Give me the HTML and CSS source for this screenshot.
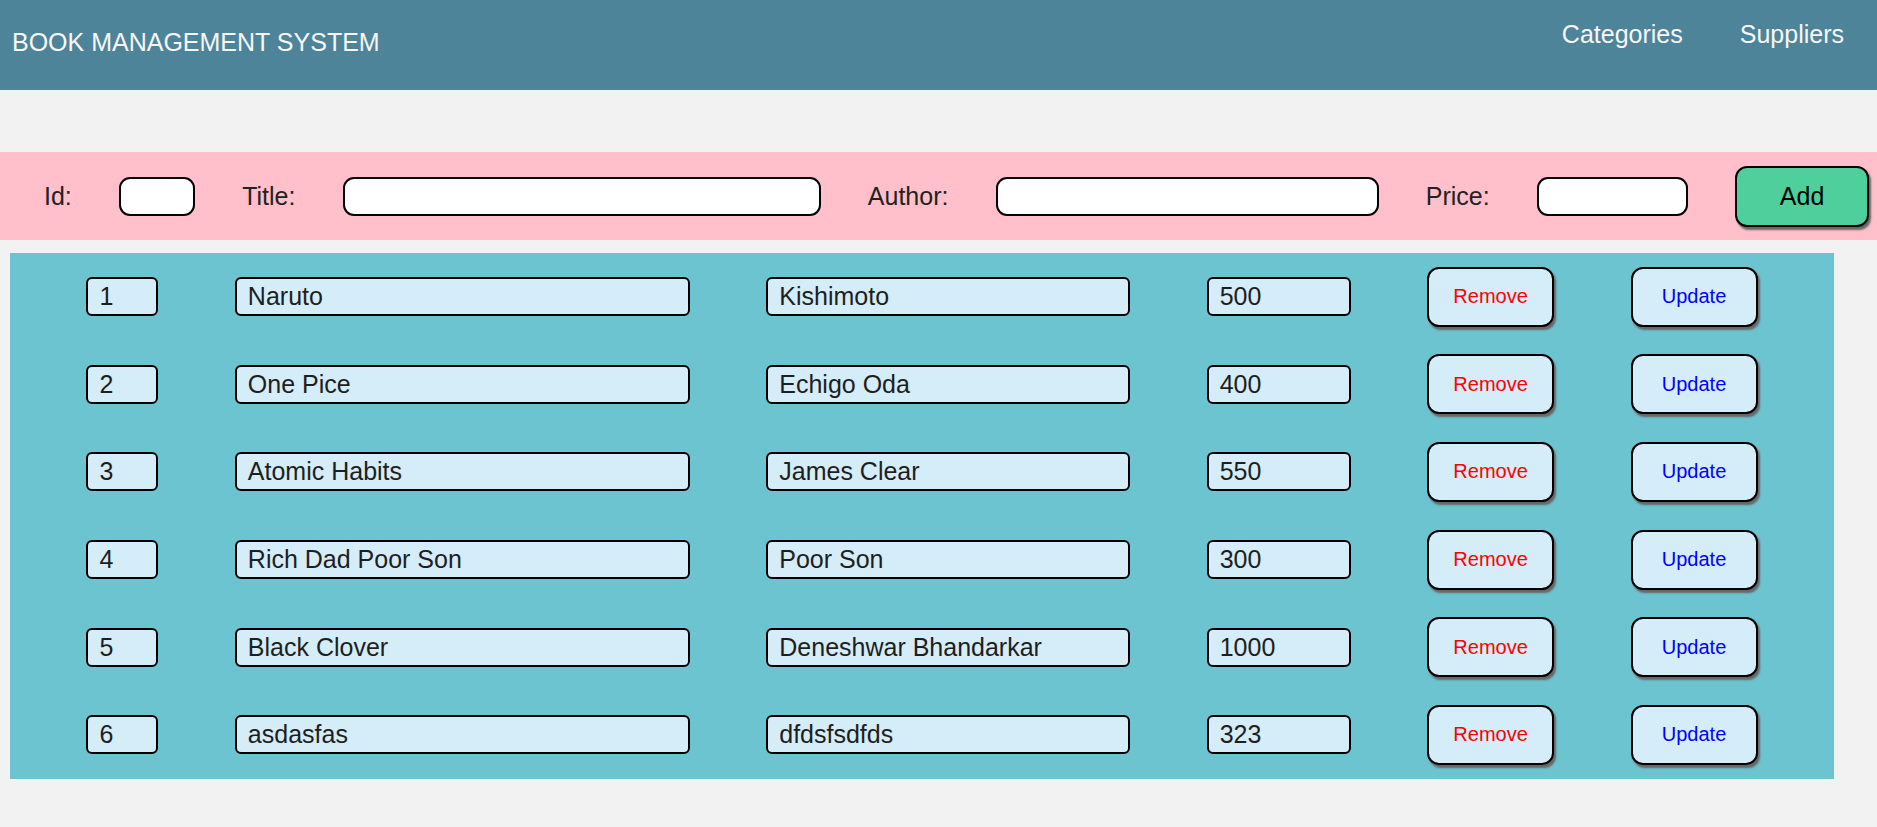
FILE: index.html
```html
<!DOCTYPE html>
<html lang="en">
<head>
<meta charset="utf-8">
<title>Book Management System</title>
<link rel="stylesheet" href="styles.css">
</head>
<body>
<header class="topbar">
  <div class="brand">BOOK MANAGEMENT SYSTEM</div>
  <nav class="nav">
    <a class="nav-link" href="#">Categories</a>
    <a class="nav-link" href="#">Suppliers</a>
  </nav>
</header>

<form class="add-form">
  <label class="form-label">Id:</label>
  <input class="form-input in-id" type="text">
  <label class="form-label">Title:</label>
  <input class="form-input in-title" type="text">
  <label class="form-label">Author:</label>
  <input class="form-input in-author" type="text">
  <label class="form-label">Price:</label>
  <input class="form-input in-price" type="text">
  <button class="add-btn" type="button">Add</button>
</form>

<section class="book-list">
  <div class="book-row">
    <span class="cell c-id">1</span>
    <span class="cell c-title">Naruto</span>
    <span class="cell c-author">Kishimoto</span>
    <span class="cell c-price">500</span>
    <button class="act remove" type="button">Remove</button>
    <button class="act update" type="button">Update</button>
  </div>
  <div class="book-row">
    <span class="cell c-id">2</span>
    <span class="cell c-title">One Pice</span>
    <span class="cell c-author">Echigo Oda</span>
    <span class="cell c-price">400</span>
    <button class="act remove" type="button">Remove</button>
    <button class="act update" type="button">Update</button>
  </div>
  <div class="book-row">
    <span class="cell c-id">3</span>
    <span class="cell c-title">Atomic Habits</span>
    <span class="cell c-author">James Clear</span>
    <span class="cell c-price">550</span>
    <button class="act remove" type="button">Remove</button>
    <button class="act update" type="button">Update</button>
  </div>
  <div class="book-row">
    <span class="cell c-id">4</span>
    <span class="cell c-title">Rich Dad Poor Son</span>
    <span class="cell c-author">Poor Son</span>
    <span class="cell c-price">300</span>
    <button class="act remove" type="button">Remove</button>
    <button class="act update" type="button">Update</button>
  </div>
  <div class="book-row">
    <span class="cell c-id">5</span>
    <span class="cell c-title">Black Clover</span>
    <span class="cell c-author">Deneshwar Bhandarkar</span>
    <span class="cell c-price">1000</span>
    <button class="act remove" type="button">Remove</button>
    <button class="act update" type="button">Update</button>
  </div>
  <div class="book-row">
    <span class="cell c-id">6</span>
    <span class="cell c-title">asdasfas</span>
    <span class="cell c-author">dfdsfsdfds</span>
    <span class="cell c-price">323</span>
    <button class="act remove" type="button">Remove</button>
    <button class="act update" type="button">Update</button>
  </div>
</section>
</body>
</html>
```

FILE: styles.css
```css
* {
  box-sizing: border-box;
}

html, body {
  margin: 0;
  padding: 0;
}

body {
  background: #f2f2f2;
  font-family: "Liberation Sans", Arial, sans-serif;
  font-size: 25px;
  color: #222;
}

.topbar {
  height: 90px;
  background: #4e849a;
  display: flex;
  justify-content: space-between;
  align-items: flex-start;
  padding: 0 33px 0 12px;
}

.brand {
  color: #f7f7f7;
  font-size: 25px;
  line-height: 29px;
  margin-top: 28px;
}

.nav {
  display: flex;
  gap: 57px;
  margin-top: 20px;
}

.nav-link {
  color: #f7f7f7;
  text-decoration: none;
  font-size: 25px;
  line-height: 29px;
}

.add-form {
  margin: 62px 0 0 0;
  height: 88px;
  background: #ffc0cb;
  display: flex;
  align-items: center;
  gap: 47.2px;
  padding-left: 44px;
}

.form-label {
  font-size: 25px;
  color: #222;
  line-height: 29px;
}

.form-input {
  height: 39px;
  border: 2px solid #000;
  border-radius: 11px;
  background: #fff;
  padding: 0 10px;
  font: inherit;
  outline: none;
}

.in-id { width: 76px; }
.in-title { width: 478px; }
.in-author { width: 383px; }
.in-price { width: 151px; }

.add-btn {
  width: 134px;
  height: 61px;
  background: #4ecf9c;
  border: 2px solid #000;
  border-radius: 12px;
  box-shadow: 2px 3px 2px #666;
  font-family: "Liberation Sans", Arial, sans-serif;
  font-size: 25px;
  color: #000;
  padding: 0;
}

.book-list {
  margin: 13px 43px 0 10px;
  background: #6cc4d0;
  display: flex;
  flex-direction: column;
}

.book-row {
  height: 87.6px;
  display: flex;
  align-items: center;
  justify-content: space-evenly;
}

.cell {
  height: 39px;
  display: flex;
  align-items: center;
  background: #d5ecf9;
  border: 2px solid #000;
  border-radius: 6px;
  padding: 0 11px;
  font-size: 25px;
  color: #1e1e1e;
  white-space: nowrap;
}

.c-id { width: 72px; }
.c-title { width: 455px; }
.c-author { width: 364px; }
.c-price { width: 144px; }

.act {
  width: 127px;
  height: 60px;
  background: #d5ecf9;
  border: 2px solid #000;
  border-radius: 12px;
  box-shadow: 2px 3px 2px #666;
  font-family: "Liberation Sans", Arial, sans-serif;
  font-size: 20px;
  padding: 0;
}

.remove { color: #ff0000; }
.update { color: #0000ff; }
```
